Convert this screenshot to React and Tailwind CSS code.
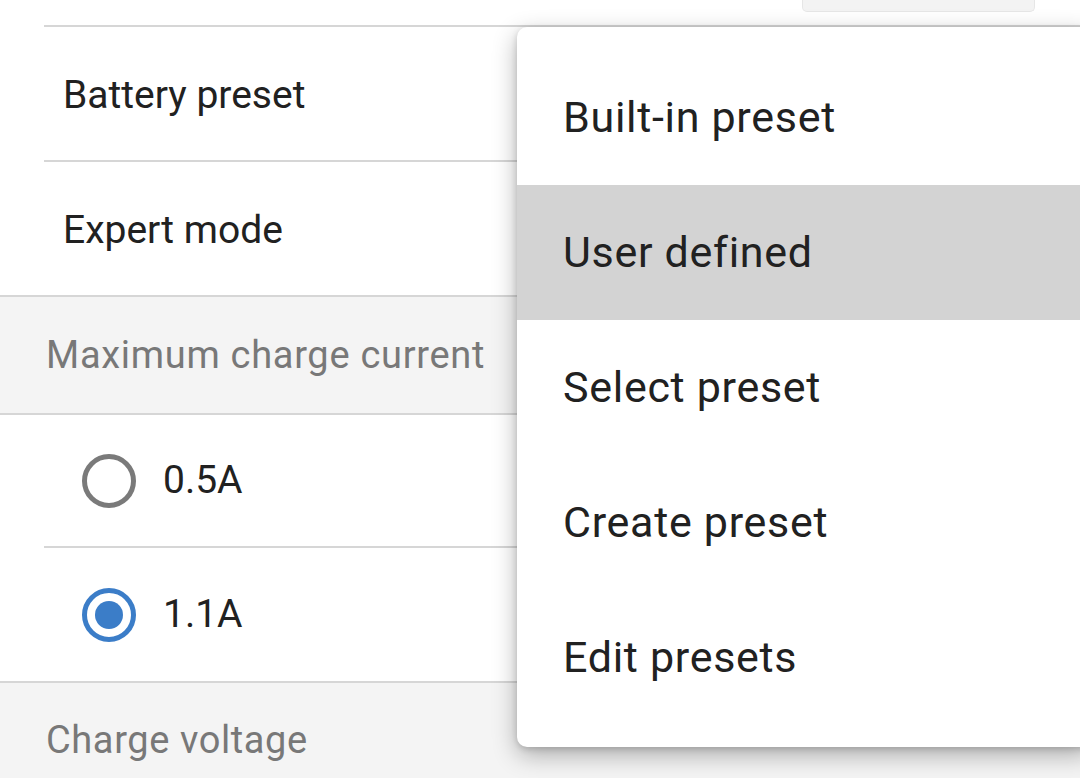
import { useState } from "react";

const menuItems = ["Built-in preset", "User defined", "Select preset", "Create preset", "Edit presets"];

function Radio({ checked }) {
    return checked ? (
        <div className="w-[54px] h-[54px] rounded-full border-[5px] border-[#3b7dc8] flex items-center justify-center">
            <div className="w-[28px] h-[28px] rounded-full bg-[#3b7dc8]" />
        </div>
    ) : (
        <div className="w-[54px] h-[54px] rounded-full border-[5px] border-[#7a7a7a]" />
    );
}

export default function App() {
    const [current, setCurrent] = useState("1.1A");
    const [preset] = useState("User defined");

    return (
        <div className="relative w-[1080px] h-[778px] overflow-hidden bg-white text-[#212121] font-['Roboto',sans-serif]">
            {/* row above, mostly scrolled off */}
            <div className="h-[25px] flex justify-end pr-[45px]">
                <div className="w-[233px] h-[12px] bg-[#f3f3f3] border border-t-0 border-[#e6e6e6] rounded-b-[5px]" />
            </div>

            <div className="pl-[44px]">
                <div className="border-t-2 border-[#d6d6d6] h-[135px] flex items-center pl-[19px] pt-[4px] text-[39px]">
                    Battery preset
                </div>
                <div className="border-t-2 border-[#d6d6d6] h-[135px] flex items-center pl-[19px] pt-[4px] text-[39px]">
                    Expert mode
                </div>
            </div>

            <div className="border-t-2 border-[#d6d6d6] bg-[#f4f4f4] h-[118px] flex items-center pl-[46px] text-[38px] tracking-[0.7px] text-[#787878]">
                Maximum charge current
            </div>

            {["0.5A", "1.1A"].map((v, i) => (
                <div key={v} className={i > 0 ? "ml-[44px] border-t-2 border-[#d6d6d6]" : "border-t-2 border-[#d6d6d6]"}>
                    <div
                        onClick={() => setCurrent(v)}
                        className={
                            (i > 0 ? "h-[133px] pl-[38px]" : "h-[131px] pl-[82px]") +
                            " flex items-center gap-[27px] text-[39px] cursor-pointer"
                        }
                    >
                        <Radio checked={current === v} />
                        <span>{v}</span>
                    </div>
                </div>
            ))}

            <div className="border-t-2 border-[#d6d6d6] bg-[#f4f4f4] h-[120px] pt-[29px] pl-[46px] text-[38px] tracking-[0.6px] text-[#787878]">
                Charge voltage
            </div>

            {/* dropdown menu */}
            <div className="absolute left-[517px] top-[27px] w-[575px] h-[720px] bg-white rounded-[10px] shadow-[0_8px_24px_rgba(0,0,0,0.3),0_2px_6px_rgba(0,0,0,0.15)] py-[23px]">
                {menuItems.map((m) => (
                    <div
                        key={m}
                        className={
                            "h-[135px] flex items-center pl-[46px] text-[43px] tracking-[0.7px] " +
                            (m === preset ? "bg-[#d3d3d3]" : "")
                        }
                    >
                        {m}
                    </div>
                ))}
            </div>
        </div>
    );
}
